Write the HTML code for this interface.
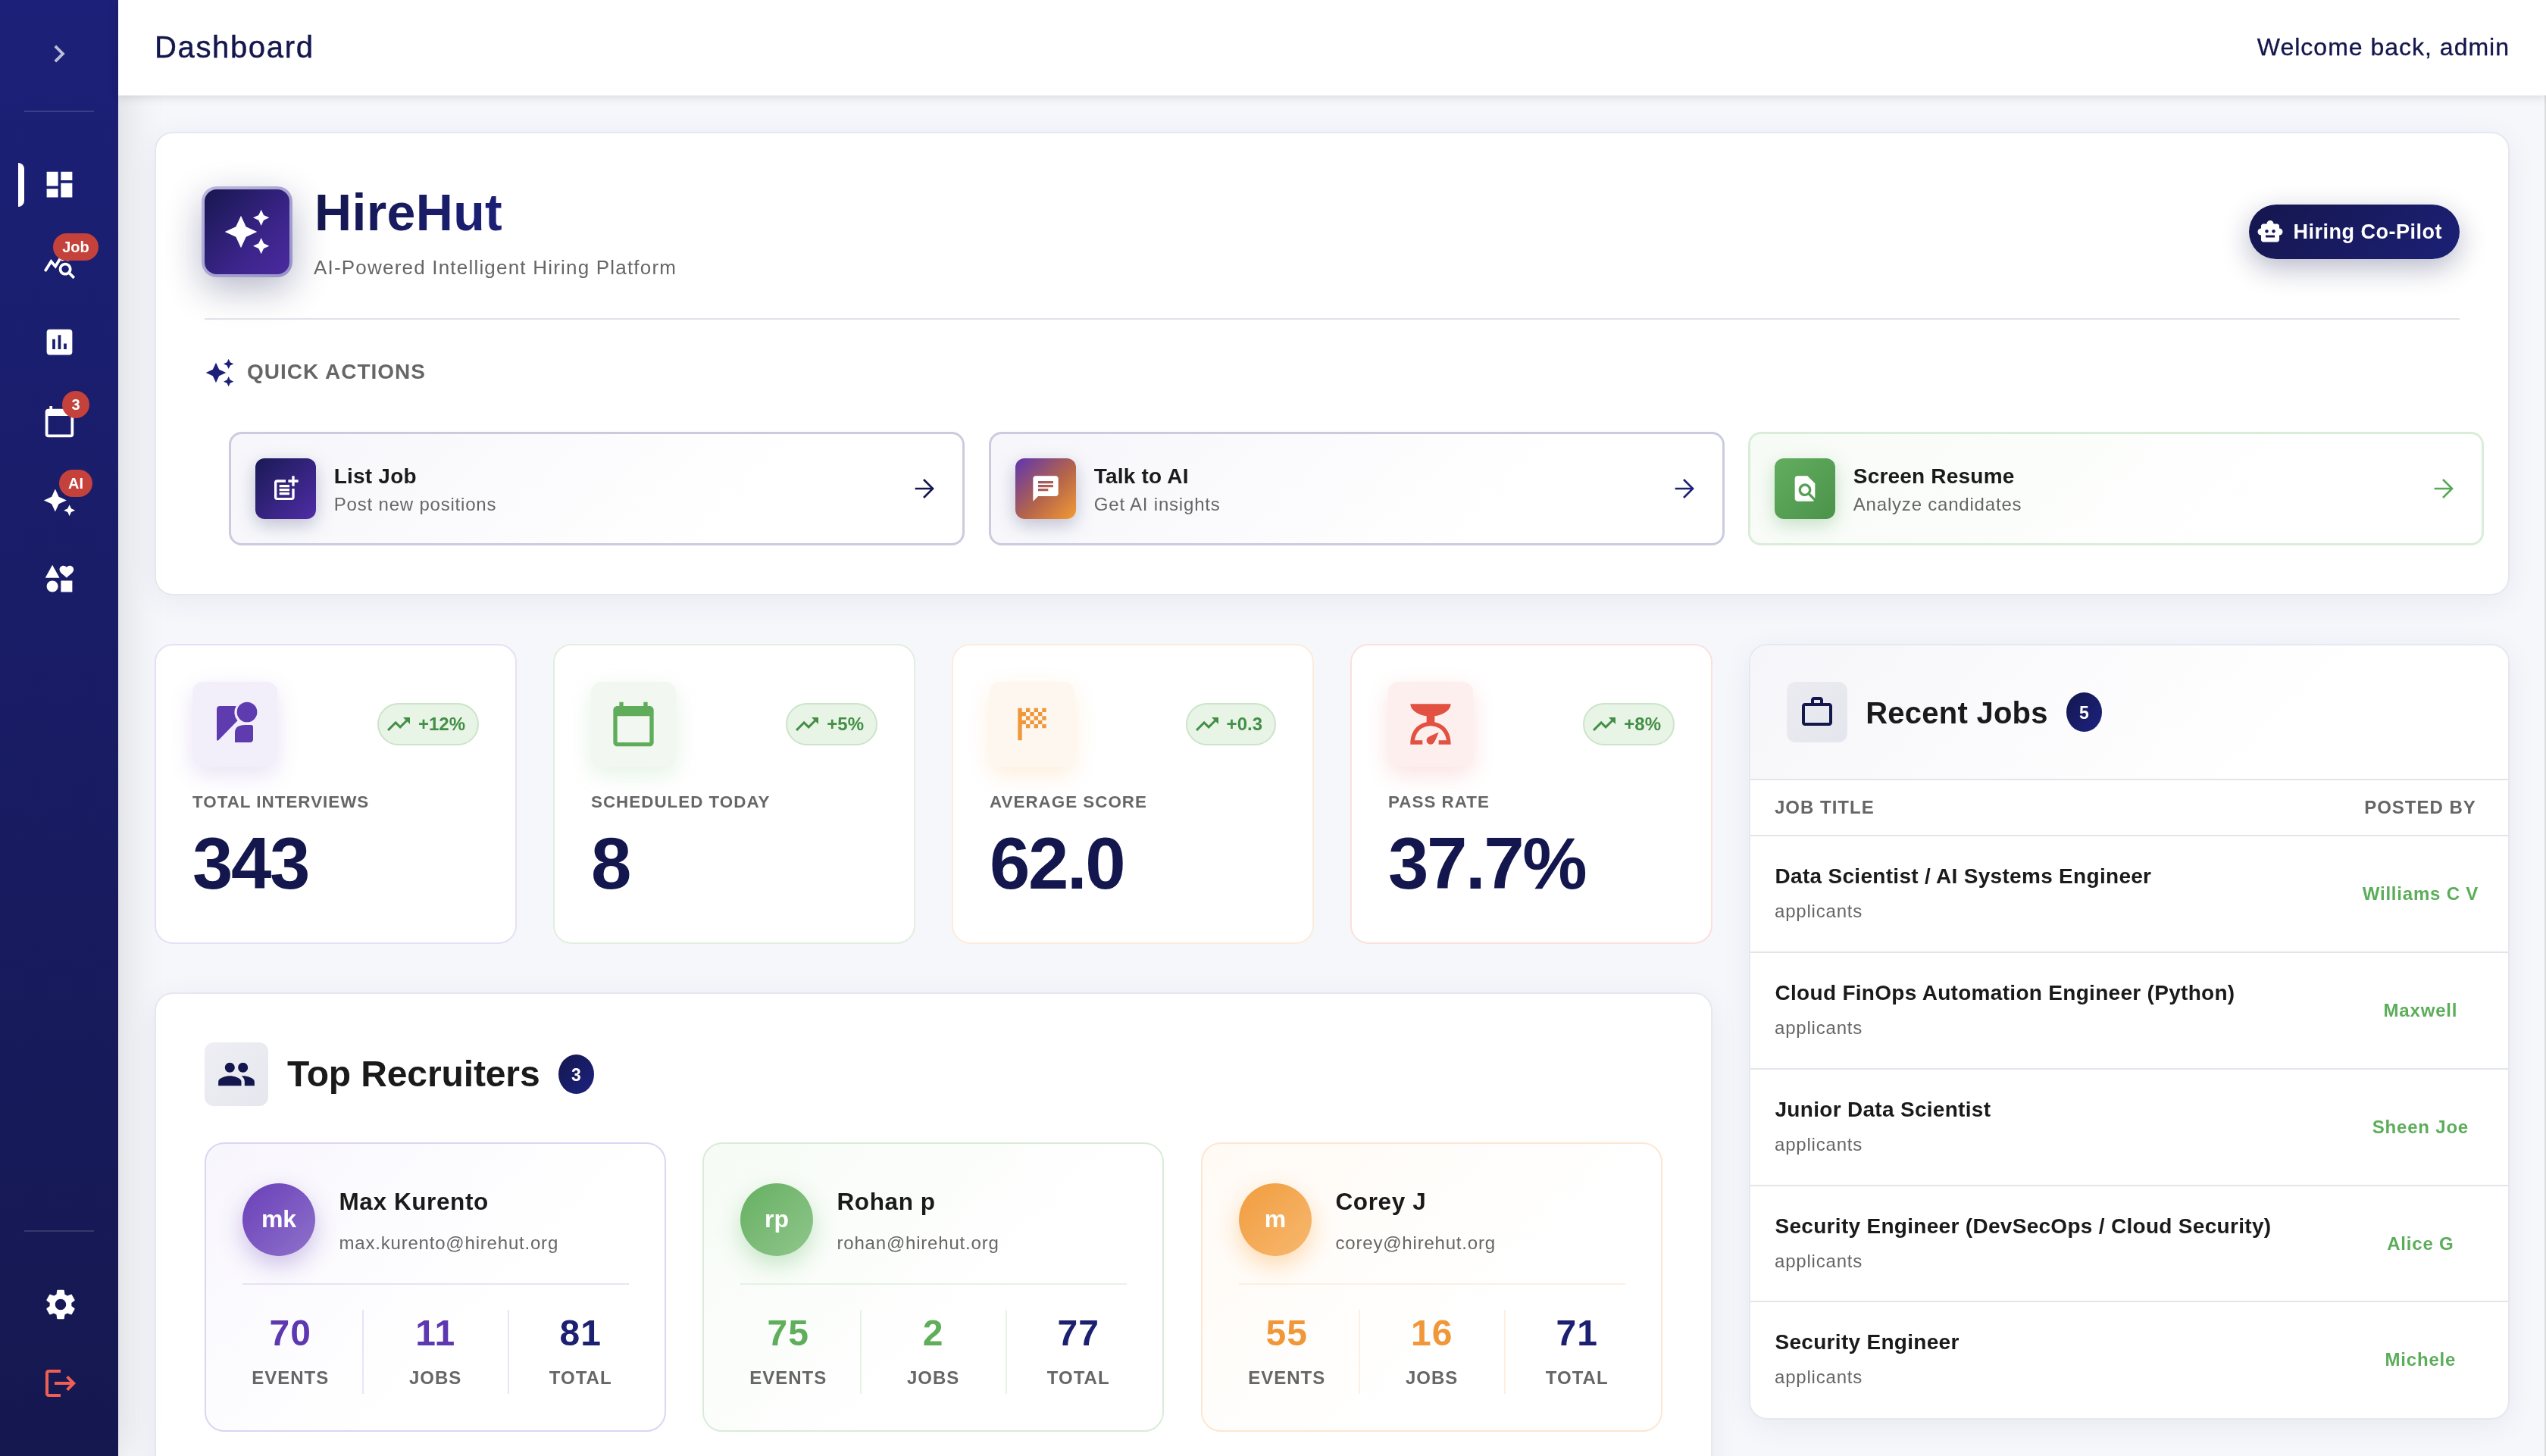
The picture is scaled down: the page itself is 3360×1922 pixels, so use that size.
<!DOCTYPE html>
<html lang="en">
<head>
<meta charset="utf-8">
<title>Dashboard</title>
<style>
*{box-sizing:border-box;margin:0;padding:0}
html,body{width:3360px;height:1922px;overflow:hidden}
body{font-family:"Liberation Sans",sans-serif;background:#f6f7fb;color:#14174d;position:relative}
.abs{position:absolute}
svg{display:block}
body>*{will-change:transform}
/* ---------- sidebar ---------- */
#sidebar{position:absolute;left:0;top:0;width:156px;height:1922px;background:linear-gradient(180deg,#1c2078 0%,#15184f 100%);box-shadow:4px 0 60px rgba(0,0,10,.13);z-index:5}
#sidebar .div{position:absolute;left:32px;width:92px;height:2px;background:rgba(255,255,255,.14)}
#sidebar .ic{position:absolute;left:55.5px;width:45px;height:45px}
#sidebar .ic svg{width:100%;height:100%;fill:#fff}
#sidebar .ind{position:absolute;left:24px;top:215px;width:8px;height:58px;background:#fff;border-radius:0 8px 8px 0}
.badge{position:absolute;background:#c5413c;color:#fff;font-weight:700;font-size:20px;border-radius:18px;height:36px;line-height:36px;text-align:center}
/* ---------- header ---------- */
#header{position:absolute;left:156px;top:0;width:3204px;height:126px;background:#fff;box-shadow:0 2px 12px rgba(0,0,10,.13);z-index:6}
#header .t{position:absolute;left:48px;top:35.7px;-webkit-text-stroke:.45px #14174d;font-size:40px;line-height:52px;color:#14174d;letter-spacing:1.65px}
#header .w{position:absolute;right:48px;top:37.6px;-webkit-text-stroke:.35px #14174d;font-size:32px;line-height:48px;color:#14174d;letter-spacing:1px;white-space:nowrap}
/* ---------- cards ---------- */
.card{position:absolute;background:#fff;border:2px solid #e7e8ef;border-radius:24px;box-shadow:0 8px 40px rgba(20,24,80,.06)}

/* ---------- hero ---------- */
#hero{left:204px;top:174px;width:3108px;height:611.5px}
#logo{position:absolute;left:266px;top:246px;width:120px;height:120px;border-radius:20px;background:linear-gradient(135deg,#bdb5e0,#9694c5);box-shadow:0 16px 48px rgba(20,24,80,.30)}
#logo::before{content:'';position:absolute;left:4px;top:4px;right:4px;bottom:4px;border-radius:16px;background:linear-gradient(135deg,#17174f 0%,#3a2488 60%,#4b2aa0 100%)}
#logo svg{position:absolute;left:28px;top:28px;width:64px;height:64px;fill:#fff}
#brand{position:absolute;left:414.5px;top:238px;font-size:68px;line-height:84px;font-weight:700;color:#14174d;letter-spacing:.35px;white-space:nowrap;background:linear-gradient(100deg,#14174d 0%,#1c2078 100%);-webkit-background-clip:text;background-clip:text;-webkit-text-fill-color:transparent}
#tag{position:absolute;left:414px;top:336.5px;font-size:26px;line-height:32px;color:#666;letter-spacing:1.2px;white-space:nowrap}
#copilot{position:absolute;left:2968px;top:270px;width:278px;height:72px;border-radius:36px;background:linear-gradient(135deg,#15164d 0%,#1c2076 100%);box-shadow:0 12px 36px rgba(20,24,80,.30);color:#fff}
#copilot svg{position:absolute;left:10px;top:18px;width:36px;height:36px;fill:#fff}
#copilot span{position:absolute;left:58.6px;top:18px;font-size:27px;line-height:36px;font-weight:700;letter-spacing:.5px;white-space:nowrap}
#hdiv{position:absolute;left:270px;top:420px;width:2976px;height:2px;background:#e1e2e8}
#qa svg{position:absolute;left:270.4px;top:471.6px;width:40px;height:40px;fill:#1c2078}
#qa span{position:absolute;left:326px;top:473.2px;font-size:28px;line-height:36px;font-weight:700;color:#666;letter-spacing:1px;white-space:nowrap}
.act{position:absolute;top:570px;width:971px;height:150px;border-radius:17px;border:3px solid #cbcbe0;background:linear-gradient(135deg,#f6f6fb 0%,#fff 70%)}
.act .ib{position:absolute;left:32px;top:32px;width:80px;height:80px;border-radius:12px;box-shadow:0 8px 24px rgba(20,24,80,.25)}
.act .ib svg{position:absolute;left:20px;top:20px;width:40px;height:40px;fill:#fff}
.act .h{position:absolute;left:135.8px;top:38.2px;font-size:28px;line-height:36px;font-weight:700;color:#1a1a1a;letter-spacing:.2px;white-space:nowrap}
.act .s{position:absolute;left:135.8px;top:76.7px;font-size:24px;line-height:32px;color:#666;letter-spacing:.8px;white-space:nowrap}
.act .ar{position:absolute;left:898.3px;top:56px;width:32px;height:32px;fill:none;stroke-width:2;stroke-linecap:butt;stroke-linejoin:miter}

/* ---------- stats ---------- */
.stat{position:absolute;top:850px;width:478px;height:395.5px;background:#fff;border:2px solid #e6e0f6;border-radius:24px}
.stat .ib{position:absolute;left:48px;top:48px;width:112px;height:112px;border-radius:14px}
.stat .ib svg{position:absolute;left:24px;top:24px;width:64px;height:64px}
.stat .bd{position:absolute;right:48px;top:76px;height:55.5px;border-radius:28px;border:2px solid #cbe5c9;background:#e8f4e6;color:#438f47;font-size:24px;font-weight:700;line-height:51.5px;padding:0 16px 0 52px;white-space:nowrap}
.stat .bd svg{position:absolute;left:8px;top:8px;width:36px;height:36px;fill:#438f47}
.stat .lb{position:absolute;left:48px;top:193px;font-size:22.4px;line-height:28px;font-weight:700;color:#666;letter-spacing:1px;white-space:nowrap}
.stat .v{position:absolute;left:48px;top:229.8px;font-size:96px;line-height:116px;font-weight:700;color:#14174d;letter-spacing:-2.4px;white-space:nowrap}
/* ---------- recruiters ---------- */
#rec{left:204px;top:1310px;width:2056px;height:700px}
.sib{position:absolute;width:84px;height:84px;border-radius:12px;background:linear-gradient(135deg,#eeeef4,#e6e6ee)}
.sib svg{position:absolute;fill:#14174d}
.st{position:absolute;font-weight:700;color:#1a1a1a;white-space:nowrap}
.cnt{position:absolute;width:47px;height:52px;border-radius:50%;background:linear-gradient(135deg,#14174d,#1d2280);color:#fff;font-weight:700;font-size:23px;line-height:54px;text-align:center}
.rc{position:absolute;top:1508px;width:609.3px;height:381.5px;border:2px solid #ddd4f3;border-radius:26px;background:linear-gradient(135deg,#f8f6fd 0%,#fff 60%)}
.rc .av{position:absolute;left:48px;top:52px;width:96px;height:96px;border-radius:50%;color:#fff;font-weight:700;font-size:32px;line-height:94px;text-align:center}
.rc .n{position:absolute;left:175.5px;top:55.5px;font-size:31.5px;line-height:40px;font-weight:700;color:#1a1a1a;letter-spacing:.6px;white-space:nowrap}
.rc .e{position:absolute;left:175.5px;top:114.5px;font-size:24px;line-height:32px;color:#666;letter-spacing:.8px;white-space:nowrap}
.rc .hl{position:absolute;left:48px;top:183.5px;width:510px;height:2px;opacity:.65}
.rc .vl{position:absolute;top:219px;width:2px;height:111px;opacity:.65}
.rc .c{position:absolute;top:221.8px;width:160px;text-align:center;margin-left:-.3px}
.rc .c b{display:block;font-size:48px;line-height:56px;font-weight:700;letter-spacing:1.2px;text-indent:1.2px}
.rc .c i{display:block;font-style:normal;font-size:24px;line-height:30px;font-weight:700;color:#666;letter-spacing:1px;text-indent:1px;margin-top:16.2px}
/* ---------- jobs ---------- */
#jobs{left:2308px;top:850px;width:1004px;height:1023.5px;overflow:hidden;background:#fff}
#jobs .hd{position:absolute;left:0;top:0;width:100%;height:178px;background:linear-gradient(135deg,#f6f6fa 0%,#fff 70%);border-bottom:2px solid #e4e5eb}
#jobs .th{position:absolute;font-size:24px;line-height:30px;font-weight:700;color:#666;letter-spacing:1px;white-space:nowrap}
#jobs .row{position:absolute;left:0;width:100%;height:154px;border-top:2px solid #e4e5eb}
#jobs .row .jt{position:absolute;left:32.5px;top:35.4px;font-size:28px;line-height:36px;font-weight:700;color:#1a1a1a;letter-spacing:.3px;white-space:nowrap}
#jobs .row .ap{position:absolute;left:32px;top:83.5px;font-size:24px;line-height:32px;color:#666;letter-spacing:.8px;white-space:nowrap}
#jobs .row .pb{position:absolute;left:784px;width:200px;top:60.5px;text-align:center;font-size:24px;line-height:32px;font-weight:700;color:#5cad5a;letter-spacing:.8px;text-indent:.8px;white-space:nowrap}
</style>
</head>
<body>

<div id="sidebar">
  <div class="ic" style="top:48px;left:55px;width:46px;height:46px;opacity:.7"><svg viewBox="0 0 24 24"><path d="M10 6L8.59 7.41 13.17 12l-4.58 4.59L10 18l6-6z"/></svg></div>
  <div class="div" style="top:146px"></div>
  <div class="ind"></div>
  <div class="ic" style="top:221px"><svg viewBox="0 0 24 24"><path d="M3 13h8V3H3v10zm0 8h8v-6H3v6zm10 0h8V11h-8v10zm0-18v6h8V3h-8z"/></svg></div>
  <div class="ic" style="top:325px"><svg viewBox="0 0 24 24"><path d="M19.88 18.47c.44-.7.7-1.51.7-2.39 0-2.49-2.01-4.5-4.5-4.5s-4.5 2.01-4.5 4.5 2.01 4.5 4.49 4.5c.88 0 1.7-.26 2.39-.7L21.58 23 23 21.58l-3.12-3.11zm-3.8.11c-1.38 0-2.5-1.12-2.5-2.5s1.12-2.5 2.5-2.5 2.5 1.12 2.5 2.5-1.12 2.5-2.5 2.5zm-.36-8.5c-.74.02-1.45.18-2.1.45l-.55-.83-3.8 6.18-3.01-3.52-3.63 5.81L1 17l5-8 3 3.5L13 6l2.72 4.08zm2.59.5c-.64-.28-1.33-.45-2.05-.49L21.38 2 23 3.18l-4.69 7.4z"/></svg></div>
  <div class="badge" style="left:70px;top:308px;width:60px">Job</div>
  <div class="ic" style="top:429px"><svg viewBox="0 0 24 24"><path d="M19 3H5c-1.1 0-2 .9-2 2v14c0 1.1.9 2 2 2h14c1.1 0 2-.9 2-2V5c0-1.1-.9-2-2-2zM9 17H7v-7h2v7zm4 0h-2V7h2v10zm4 0h-2v-4h2v4z"/></svg></div>
  <div class="ic" style="top:533.5px"><svg viewBox="0 0 24 24"><path d="M20 3h-1V1h-2v2H7V1H5v2H4c-1.1 0-2 .9-2 2v16c0 1.1.9 2 2 2h16c1.1 0 2-.9 2-2V5c0-1.1-.9-2-2-2zm0 18H4V8h16v13z"/></svg></div>
  <div class="badge" style="left:82px;top:516px;width:36px">3</div>
  <div class="ic" style="top:637.5px"><svg viewBox="0 0 24 24"><path d="M19 9l1.25-2.75L23 5l-2.75-1.25L19 1l-1.25 2.75L15 5l2.75 1.25L19 9zm-7.500.5L9 4 6.500 9.500 1 12l5.500 2.500L9 20l2.500-5.500L17 12l-5.500-2.500zM19 15l-1.250 2.750L15 19l2.750 1.250L19 23l1.250-2.750L23 19l-2.750-1.250L19 15z"/></svg></div>
  <div class="badge" style="left:78px;top:620px;width:44px">AI</div>
  <div class="ic" style="top:741.5px"><svg viewBox="0 0 24 24"><path d="M7.02 13c-2.210 0-4 1.790-4 4s1.790 4 4 4 4-1.790 4-4-1.790-4-4-4zM13 13v8h8v-8h-8zM7 2l-5 9h10L7 2zm12.250.500c-1.060 0-1.810.560-2.250 1.170-.440-.610-1.190-1.170-2.250-1.170C13.190 2.500 12 3.780 12 5.250c0 2 2.420 3.420 5 5.750 2.580-2.330 5-3.750 5-5.750 0-1.470-1.190-2.750-2.750-2.750z"/></svg></div>
  <div class="div" style="top:1624px"></div>
  <div class="ic" style="top:1698px;left:56px;width:48px;height:48px"><svg viewBox="0 0 24 24"><path d="M19.140 12.940c.040-.300.060-.610.060-.940 0-.320-.020-.640-.070-.940l2.030-1.580c.180-.140.230-.410.120-.610l-1.920-3.320c-.120-.220-.370-.290-.590-.220l-2.390.960c-.500-.380-1.030-.700-1.620-.940l-.360-2.540c-.040-.240-.240-.410-.480-.410h-3.840c-.240 0-.430.170-.470.410l-.360 2.540c-.590.240-1.130.570-1.620.940l-2.390-.960c-.220-.080-.470 0-.590.220L2.740 8.870c-.120.210-.080.470.120.610l2.030 1.580c-.050.300-.090.630-.090.940s.020.640.070.940l-2.030 1.580c-.180.140-.230.410-.120.610l1.920 3.320c.120.220.370.290.590.220l2.390-.960c.500.380 1.030.700 1.620.940l.360 2.540c.050.240.240.410.480.410h3.840c.240 0 .440-.170.470-.410l.360-2.540c.590-.240 1.130-.560 1.620-.940l2.390.960c.220.080.470 0 .590-.220l1.920-3.320c.120-.220.070-.470-.120-.610l-2.010-1.580zM12 15.600c-1.980 0-3.600-1.620-3.600-3.600s1.620-3.600 3.600-3.600 3.600 1.620 3.600 3.600-1.620 3.600-3.600 3.600z"/></svg></div>
  <div class="ic" style="top:1802px;left:56px;width:48px;height:48px"><svg viewBox="0 0 24 24" style="fill:#ef5f55"><path d="M17 7l-1.410 1.410L18.170 11H8v2h10.170l-2.580 2.580L17 17l5-5zM4 5h8V3H4c-1.100 0-2 .900-2 2v14c0 1.100.900 2 2 2h8v-2H4V5z"/></svg></div>
</div>

<div style="position:absolute;left:3358px;top:126px;width:2px;height:1796px;background:#dcdcdf"></div>
<div id="header">
  <div class="t">Dashboard</div>
  <div class="w">Welcome back, admin</div>
</div>


<div class="card" id="hero"></div>
<div id="logo"><svg viewBox="0 0 24 24"><path d="M19 9l1.25-2.75L23 5l-2.75-1.25L19 1l-1.25 2.75L15 5l2.75 1.25L19 9zm-7.5.5L9 4 6.5 9.5 1 12l5.5 2.5L9 20l2.5-5.5L17 12l-5.5-2.5zM19 15l-1.25 2.75L15 19l2.75 1.25L19 23l1.25-2.75L23 19l-2.75-1.25L19 15z"/></svg></div>
<div id="brand">HireHut</div>
<div id="tag">AI-Powered Intelligent Hiring Platform</div>
<div id="copilot"><svg viewBox="0 0 24 24"><path d="M20 9V7c0-1.1-.9-2-2-2h-3c0-1.66-1.34-3-3-3S9 3.340 9 5H6c-1.100 0-2 .900-2 2v2c-1.660 0-3 1.340-3 3s1.340 3 3 3v4c0 1.100.900 2 2 2h12c1.100 0 2-.900 2-2v-4c1.660 0 3-1.340 3-3s-1.340-3-3-3zM7.500 11.500c0-.830.670-1.500 1.500-1.500s1.500.670 1.500 1.500S9.830 13 9 13s-1.500-.670-1.500-1.500zM16 17H8v-2h8v2zm-1-4c-.830 0-1.500-.670-1.500-1.500S14.170 10 15 10s1.500.670 1.500 1.500S15.830 13 15 13z"/></svg><span>Hiring Co-Pilot</span></div>
<div id="hdiv"></div>
<div id="qa"><svg viewBox="0 0 24 24"><path d="M19 9l1.25-2.75L23 5l-2.75-1.25L19 1l-1.25 2.75L15 5l2.75 1.25L19 9zm-7.5.5L9 4 6.5 9.5 1 12l5.5 2.5L9 20l2.5-5.5L17 12l-5.5-2.5zM19 15l-1.25 2.75L15 19l2.75 1.250L19 23l1.250-2.750L23 19l-2.750-1.250L19 15z"/></svg><span>QUICK ACTIONS</span></div>

<div class="act" style="left:302px">
  <div class="ib" style="background:linear-gradient(135deg,#1a1a55 0%,#4f2ca6 100%)"><svg viewBox="0 0 24 24"><path d="M17 19.220H5V7h7V5H5c-1.100 0-2 .900-2 2v12c0 1.100.900 2 2 2h12c1.100 0 2-.900 2-2v-7h-2v7.220z"/><path d="M19 2h-2v3h-3c.010.010 0 2 0 2h3v2.990c.010.010 2 0 2 0V7h3V5h-3V2zM7 9h8v2H7zM7 12v2h8v-2h-3zM7 15h8v2H7z"/></svg></div>
  <div class="h">List Job</div><div class="s">Post new positions</div>
  <svg class="ar" viewBox="0 0 24 24" style="stroke:#14174d"><path d="M3.5 12H21M12 3l9 9-9 9"/></svg>
</div>
<div class="act" style="left:1304.5px">
  <div class="ib" style="background:linear-gradient(135deg,#5e35b1 0%,#b5654a 55%,#f39a35 100%)"><svg viewBox="0 0 24 24"><path d="M20 2H4c-1.100 0-1.990.900-1.990 2L2 22l4-4h14c1.100 0 2-.900 2-2V4c0-1.100-.900-2-2-2zM6 9h12v2H6V9zm8 5H6v-2h8v2zm4-6H6V6h12v2z"/></svg></div>
  <div class="h">Talk to AI</div><div class="s">Get AI insights</div>
  <svg class="ar" viewBox="0 0 24 24" style="stroke:#1c2078"><path d="M3.5 12H21M12 3l9 9-9 9"/></svg>
</div>
<div class="act" style="left:2307.3px;border-color:#d9edd9;background:linear-gradient(135deg,#f7fbf6 0%,#fff 70%)">
  <div class="ib" style="background:linear-gradient(135deg,#63ad5f 0%,#4a934a 100%);box-shadow:0 8px 24px rgba(76,160,80,.30)"><svg viewBox="0 0 24 24"><path d="M20 19.590V8l-6-6H6c-1.100 0-1.990.900-1.990 2L4 20c0 1.100.890 2 1.990 2H18c.450 0 .850-.150 1.190-.400l-4.430-4.430c-.800.520-1.740.830-2.760.830-2.760 0-5-2.240-5-5s2.240-5 5-5 5 2.240 5 5c0 1.020-.310 1.960-.830 2.750L20 19.590zM9 13c0 1.660 1.340 3 3 3s3-1.340 3-3-1.340-3-3-3-3 1.340-3 3z"/></svg></div>
  <div class="h">Screen Resume</div><div class="s">Analyze candidates</div>
  <svg class="ar" viewBox="0 0 24 24" style="stroke:#5aa85a"><path d="M3.5 12H21M12 3l9 9-9 9"/></svg>
</div>


<div class="stat" style="left:204px">
  <div class="ib" style="background:#f2effa;box-shadow:0 10px 30px rgba(103,58,183,.15)"><svg viewBox="0 0 24 24" style="fill:#5f3bb0"><path d="M4.6 3H12.6A6.2 6.2 0 0 0 13.3 10.2L3.9 19.9Q3 20.6 3 19.4V4.6Q3 3 4.6 3Z"/><circle cx="18" cy="6" r="5"/><path d="M12 21V16.2Q12 12.4 17 12.4H20Q21 12.4 21 13.4V19.4Q21 21 19.4 21Z"/></svg></div>
  <div class="bd"><svg viewBox="0 0 24 24"><path d="M16 6l2.29 2.29-4.88 4.88-4-4L2 16.59 3.41 18l6-6 4 4 6.3-6.29L22 12V6z"/></svg>+12%</div>
  <div class="lb">TOTAL INTERVIEWS</div><div class="v">343</div>
</div>
<div class="stat" style="left:730px;border-color:#e0efe0">
  <div class="ib" style="background:#f2f8f1;box-shadow:0 10px 30px rgba(76,175,80,.15)"><svg viewBox="0 0 24 24" style="fill:#5fad5b"><path d="M20 3h-1V1h-2v2H7V1H5v2H4c-1.1 0-2 .9-2 2v16c0 1.1.9 2 2 2h16c1.1 0 2-.9 2-2V5c0-1.1-.9-2-2-2zm0 18H4V8h16v13z"/></svg></div>
  <div class="bd"><svg viewBox="0 0 24 24"><path d="M16 6l2.29 2.29-4.88 4.88-4-4L2 16.59 3.41 18l6-6 4 4 6.3-6.29L22 12V6z"/></svg>+5%</div>
  <div class="lb">SCHEDULED TODAY</div><div class="v">8</div>
</div>
<div class="stat" style="left:1256px;border-color:#fdebdc">
  <div class="ib" style="background:#fef7f0;box-shadow:0 10px 30px rgba(251,140,0,.15)"><svg viewBox="0 0 24 24" style="fill:#f0973a"><path d="M11 6H9V4h2v2zm4-2h-2v2h2V4zM9 14h2v-2H9v2zm10-4V8h-2v2h2zm0 4v-2h-2v2h2zm-6 0h2v-2h-2v2zm6-10h-2v2h2V4zm-6 4V6h-2v2h2zm-6 2V8h2V6H7V4H5v16h2v-8h2v-2H7zm8 2h2v-2h-2v2zm-4-2v2h2v-2h-2zM9 8v2h2V8H9zm4 2h2V8h-2v2zm2-4v2h2V6h-2z"/></svg></div>
  <div class="bd"><svg viewBox="0 0 24 24"><path d="M16 6l2.29 2.29-4.88 4.88-4-4L2 16.59 3.41 18l6-6 4 4 6.3-6.29L22 12V6z"/></svg>+0.3</div>
  <div class="lb">AVERAGE SCORE</div><div class="v">62.0</div>
</div>
<div class="stat" style="left:1782px;border-color:#fbe0de">
  <div class="ib" style="background:#fdefee;box-shadow:0 10px 30px rgba(229,57,53,.15)"><svg viewBox="0 0 24 24" style="fill:#e25141"><path d="M14 11V8c4.56-.58 8-3.1 8-6H2c0 2.9 3.44 5.42 8 6v3c-3.68.73-8 3.61-8 11h6v-2H4.13c.93-6.83 6.65-7.2 7.87-7.2s6.940.370 7.870 7.200H16v2h6c0-7.390-4.320-10.270-8-11zm-2 11c-1.100 0-2-.900-2-2 0-.550.220-1.050.590-1.410C11.390 17.790 16 16 16 16s-1.790 4.610-2.590 5.410c-.360.370-.860.590-1.410.590z"/></svg></div>
  <div class="bd"><svg viewBox="0 0 24 24"><path d="M16 6l2.29 2.29-4.88 4.88-4-4L2 16.59 3.41 18l6-6 4 4 6.3-6.29L22 12V6z"/></svg>+8%</div>
  <div class="lb">PASS RATE</div><div class="v">37.7%</div>
</div>


<div class="card" id="rec"></div>
<div class="sib" style="left:270px;top:1376px"><svg viewBox="0 0 24 24" style="left:16px;top:16px;width:52px;height:52px"><path d="M16 11c1.660 0 2.990-1.340 2.990-3S17.660 5 16 5c-1.660 0-3 1.340-3 3s1.340 3 3 3zm-8 0c1.660 0 2.990-1.340 2.990-3S9.660 5 8 5C6.340 5 5 6.340 5 8s1.340 3 3 3zm0 2c-2.330 0-7 1.170-7 3.500V19h14v-2.500c0-2.330-4.670-3.500-7-3.500zm8 0c-.290 0-.620.020-.970.050 1.160.840 1.970 1.970 1.970 3.450V19h6v-2.500c0-2.330-4.670-3.500-7-3.500z"/></svg></div>
<div class="st" style="left:378.5px;top:1389px;font-size:48px;line-height:58px;letter-spacing:-.12px">Top Recruiters</div>
<div class="cnt" style="left:737px;top:1392px">3</div>

<div class="rc" style="left:270px;border-color:#ddd4f3;background:linear-gradient(135deg,#f8f6fd 0%,#fff 60%)">
  <div class="av" style="background:linear-gradient(135deg,#6a3fb8 0%,#8e72cb 100%);box-shadow:0 12px 32px rgba(103,58,183,.30)">mk</div>
  <div class="n">Max Kurento</div><div class="e">max.kurento@hirehut.org</div>
  <div class="hl" style="background:#ddd4f3"></div>
  <div class="vl" style="left:205.8px;background:#ddd4f3"></div><div class="vl" style="left:398px;background:#ddd4f3"></div>
  <div class="c" style="left:31px"><b style="color:#5e38b0">70</b><i>EVENTS</i></div>
  <div class="c" style="left:222.5px"><b style="color:#5e38b0">11</b><i>JOBS</i></div>
  <div class="c" style="left:414px"><b style="color:#1c2070">81</b><i>TOTAL</i></div>
</div>
<div class="rc" style="left:927.3px;border-color:#d9ecd8;background:linear-gradient(135deg,#f6fbf5 0%,#fff 60%)">
  <div class="av" style="background:linear-gradient(135deg,#66b062 0%,#90c68c 100%);box-shadow:0 12px 32px rgba(76,175,80,.30)">rp</div>
  <div class="n">Rohan p</div><div class="e">rohan@hirehut.org</div>
  <div class="hl" style="background:#d9ecd8"></div>
  <div class="vl" style="left:205.8px;background:#d9ecd8"></div><div class="vl" style="left:398px;background:#d9ecd8"></div>
  <div class="c" style="left:31px"><b style="color:#5fae5b">75</b><i>EVENTS</i></div>
  <div class="c" style="left:222.5px"><b style="color:#5fae5b">2</b><i>JOBS</i></div>
  <div class="c" style="left:414px"><b style="color:#1c2070">77</b><i>TOTAL</i></div>
</div>
<div class="rc" style="left:1584.7px;border-color:#fde6d2;background:linear-gradient(135deg,#fffaf4 0%,#fff 60%)">
  <div class="av" style="background:linear-gradient(135deg,#f19d3f 0%,#f7b86f 100%);box-shadow:0 12px 32px rgba(251,140,0,.30)">m</div>
  <div class="n">Corey J</div><div class="e">corey@hirehut.org</div>
  <div class="hl" style="background:#fde6d2"></div>
  <div class="vl" style="left:205.8px;background:#fde6d2"></div><div class="vl" style="left:398px;background:#fde6d2"></div>
  <div class="c" style="left:31px"><b style="color:#f0973a">55</b><i>EVENTS</i></div>
  <div class="c" style="left:222.5px"><b style="color:#f0973a">16</b><i>JOBS</i></div>
  <div class="c" style="left:414px"><b style="color:#1c2070">71</b><i>TOTAL</i></div>
</div>

<div class="card" id="jobs">
  <div class="hd"></div>
  <div class="sib" style="left:48px;top:48px;width:80px;height:80px;background:linear-gradient(135deg,#ebebf1,#e5e5ed)"><svg viewBox="0 0 24 24" style="left:16px;top:16px;width:48px;height:48px"><path d="M14 6V4h-4v2h4zM4 8v11h16V8H4zm16-2c1.110 0 2 .890 2 2v11c0 1.110-.890 2-2 2H4c-1.110 0-2-.890-2-2l.010-11c0-1.110.880-2 1.990-2h4V4c0-1.110.890-2 2-2h4c1.110 0 2 .890 2 2v2h4z"/></svg></div>
  <div class="st" style="left:152.2px;top:65px;font-size:40px;line-height:48px;letter-spacing:.25px">Recent Jobs</div>
  <div class="cnt" style="left:417px;top:62px">5</div>
  <div class="th" style="left:32px;top:199px">JOB TITLE</div>
  <div class="th" style="left:784px;width:200px;text-align:center;top:199px">POSTED BY</div>
  <div class="row" style="top:249.6px"><div class="jt">Data Scientist / AI Systems Engineer</div><div class="ap">applicants</div><div class="pb">Williams C V</div></div>
  <div class="row" style="top:403.6px"><div class="jt">Cloud FinOps Automation Engineer (Python)</div><div class="ap">applicants</div><div class="pb">Maxwell</div></div>
  <div class="row" style="top:557.6px"><div class="jt">Junior Data Scientist</div><div class="ap">applicants</div><div class="pb">Sheen Joe</div></div>
  <div class="row" style="top:711.6px"><div class="jt">Security Engineer (DevSecOps / Cloud Security)</div><div class="ap">applicants</div><div class="pb">Alice G</div></div>
  <div class="row" style="top:864.6px"><div class="jt">Security Engineer</div><div class="ap">applicants</div><div class="pb">Michele</div></div>
</div>


</body>
</html>
